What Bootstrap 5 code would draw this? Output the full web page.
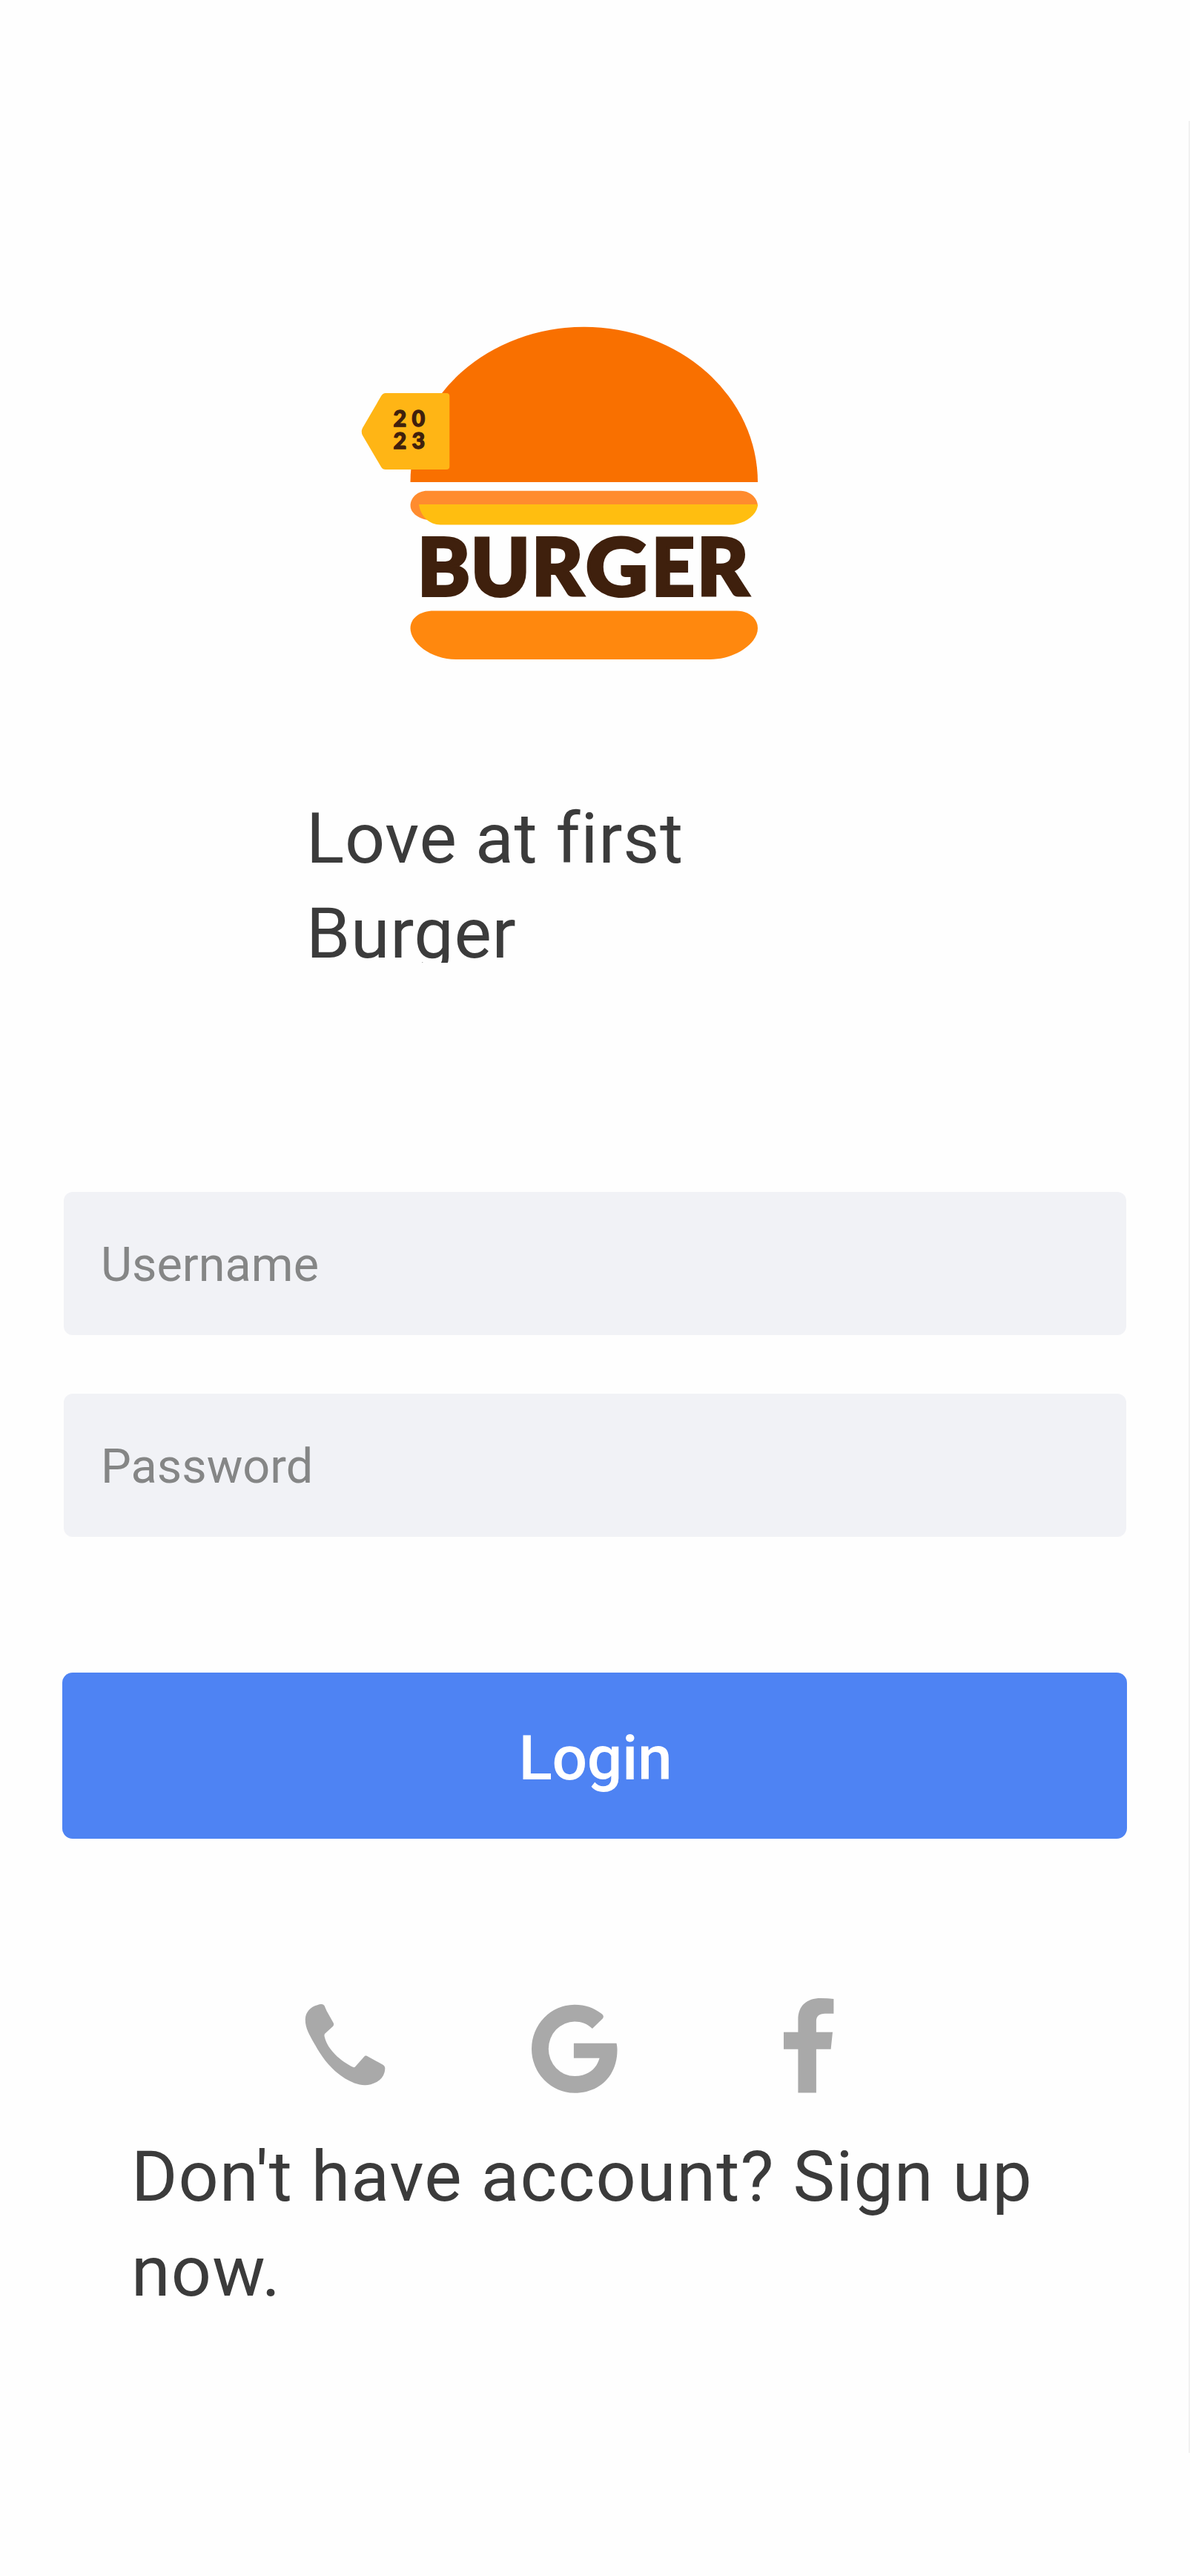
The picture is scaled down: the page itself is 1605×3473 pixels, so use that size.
<!DOCTYPE html>
<html lang="en">
<head>
<meta charset="utf-8">
<meta name="viewport" content="width=device-width, initial-scale=1">
<title>Burger Login</title>
<link href="https://cdn.jsdelivr.net/npm/bootstrap@5.3.0/dist/css/bootstrap.min.css" rel="stylesheet">
<style>
  body { background: #fefefe; font-family: Roboto, "Liberation Sans", sans-serif; color: #3b3b3b; }
  .screen { width: 1605px; height: 3473px; padding-top: 163px; }
  .panel { height: 3144px; padding: 277px 83px 0 84px; border-right: 2px solid #f1f1f1; }
  .brand { margin-left: 402px; width: 538px; height: 450px; }
  .tagline { margin: 177px 0 0 329px; width: 640px; height: 231px; font-size: 95.2px; line-height: 128px; letter-spacing: .7px; font-variant-ligatures: none; }
  .login-form { margin-top: 309px; }
  .login-form .form-control { width: 1433px; height: 193px; margin-left: 2px; padding: 2px 50px 0; border: 0; border-radius: 12px; background: #f1f2f6; font-size: 64.8px; color: #3b3b3b; }
  .login-form .form-control::placeholder { color: #858686; }
  .login-form .form-control + .form-control { margin-top: 79px; }
  .btn-login { height: 224px; margin-top: 183px; border: 0; border-radius: 14px; background: #4e83f3; color: #fff; font-size: 84px; font-weight: 500; line-height: 1; padding: 8px 0 0 2px; letter-spacing: -.4px; }
  .socials { margin: 215px 0 0 327px; height: 129px; color: #a9a9a9; }
  .ico-phone { margin-top: 8px; }
  .ico-google { margin: 8px 0 0 195px; }
  .ico-facebook { margin-left: 224px; }
  .signup { margin: 48px 0 0 93px; width: 1290px; font-size: 95.2px; line-height: 128px; letter-spacing: 1.15px; }
</style>
<script src="https://cdn.jsdelivr.net/npm/bootstrap@5.3.0/dist/js/bootstrap.bundle.min.js"></script>
</head>
<body>
<main class="screen overflow-hidden">
  <div class="panel d-flex flex-column">
    <svg class="brand d-block flex-shrink-0" viewBox="486 440 538 450" role="img" aria-label="Burger 2023">
      <path fill="#f97000" d="M553.500 650A234.250 209.300 0 0 1 1022 650Z"/>
      <path fill="#ffb515" d="M520 530H602Q606.300 530 606.300 534V629Q606.300 633 602 633H520Q516 633 514 629.500L489 587Q486.500 582 489 577L514 534Q516.500 530 520 530Z"/>
      <path fill="#ff8c2e" d="M576 661.700H999C1012 661.700 1022 672 1022 682L1000 700H592C570 705 553.600 693 553.600 682C553.600 671 563 661.700 576 661.700Z"/>
      <path fill="#ffbe10" d="M565 680H1022C1022 694 1004 707.500 984 707.500H594C579 707.500 567 696 565 680Z"/>
      <path fill="#ff880e" d="M585 823.500H993C1010 823.500 1022 834 1022 847C1022 868 991 889 958 889H615C580 889 553.500 866 553.500 847C553.500 833 567 823.500 585 823.500Z"/>
      <g fill="#3f200d" stroke="#3f200d" stroke-linejoin="miter" font-family="Lato, sans-serif" font-weight="900">
        <g font-size="107" stroke-width="4">
          <text x="563" y="802.500">B</text>
          <text x="635" y="802.500">U</text>
          <text x="717" y="802.500">R</text>
          <text transform="translate(790 802.500) scale(1.080 1)">G</text>
          <text transform="translate(879 802.500) scale(.940 1)">E</text>
          <text x="940" y="802.500">R</text>
        </g>
        <g font-size="30.500" stroke-width="1.300" fill="#3f200d">
          <text x="530.500" y="574.500">2</text><text x="555.500" y="574.500">0</text>
          <text x="530.500" y="604.500">2</text><text x="555.500" y="604.500">3</text>
        </g>
      </g>
    </svg>

    <p class="tagline overflow-hidden flex-shrink-0">Love at first Burger</p>

    <form class="login-form d-flex flex-column">
      <input class="form-control shadow-none" type="text" placeholder="Username" aria-label="Username">
      <input class="form-control shadow-none" type="password" placeholder="Password" aria-label="Password">
      <button class="btn btn-primary btn-login w-100" type="button">Login</button>
    </form>

    <div class="socials d-flex align-items-start flex-shrink-0">
      <svg class="ico-phone" width="110" height="110" viewBox="0 0 110 110" fill="currentColor"><path d="M17 1.300Q24-1.500 26.500 2L29.500 9L38.500 25Q40 27.500 38 30L27 40Q26 42 27 45C31 61 48 77 66 85.300L67.500 85L80 71Q82 68.500 85 70.500L105 81.500Q108.500 83.500 108.300 87C108 95 104 101 97 105C87 110.500 77 110 67 106.500C43 97 26 77 14 55C6 41 .500 32 .800 20C1 11 8 3.500 17 1.300Z"/></svg>
      <svg class="ico-google" width="117" height="120" viewBox="0 0 117 120" fill="currentColor"><path d="M95.500 13Q99.500 16 96.800 19.500L82.900 33C76 26.500 68 23.600 59 23.600A35.200 36.700 0 0 0 59 97C78 97 89 86 92.600 72.700H57.900V52.700H115.500C116.300 56 116.500 59 116.500 62C116.500 97 92 119.800 59 119.800A58 59.500 0 0 1 59 .8C73 .8 85 5 95.500 13Z"/></svg>
      <svg class="ico-facebook" width="68" height="128" viewBox="0 0 68 128" fill="currentColor"><path d="M67.400 1V20.700H56Q43.900 20.700 43.900 31V45.700H66L63.600 68.700H43.900V127.600H19.400V68.700H0V45.700H19.400V29C19.400 10 31 0 50 0Q60 0 67.400 1Z"/></svg>
    </div>

    <p class="signup mb-0 flex-shrink-0">Don't have account? Sign up now.</p>
  </div>
</main>
</body>
</html>
